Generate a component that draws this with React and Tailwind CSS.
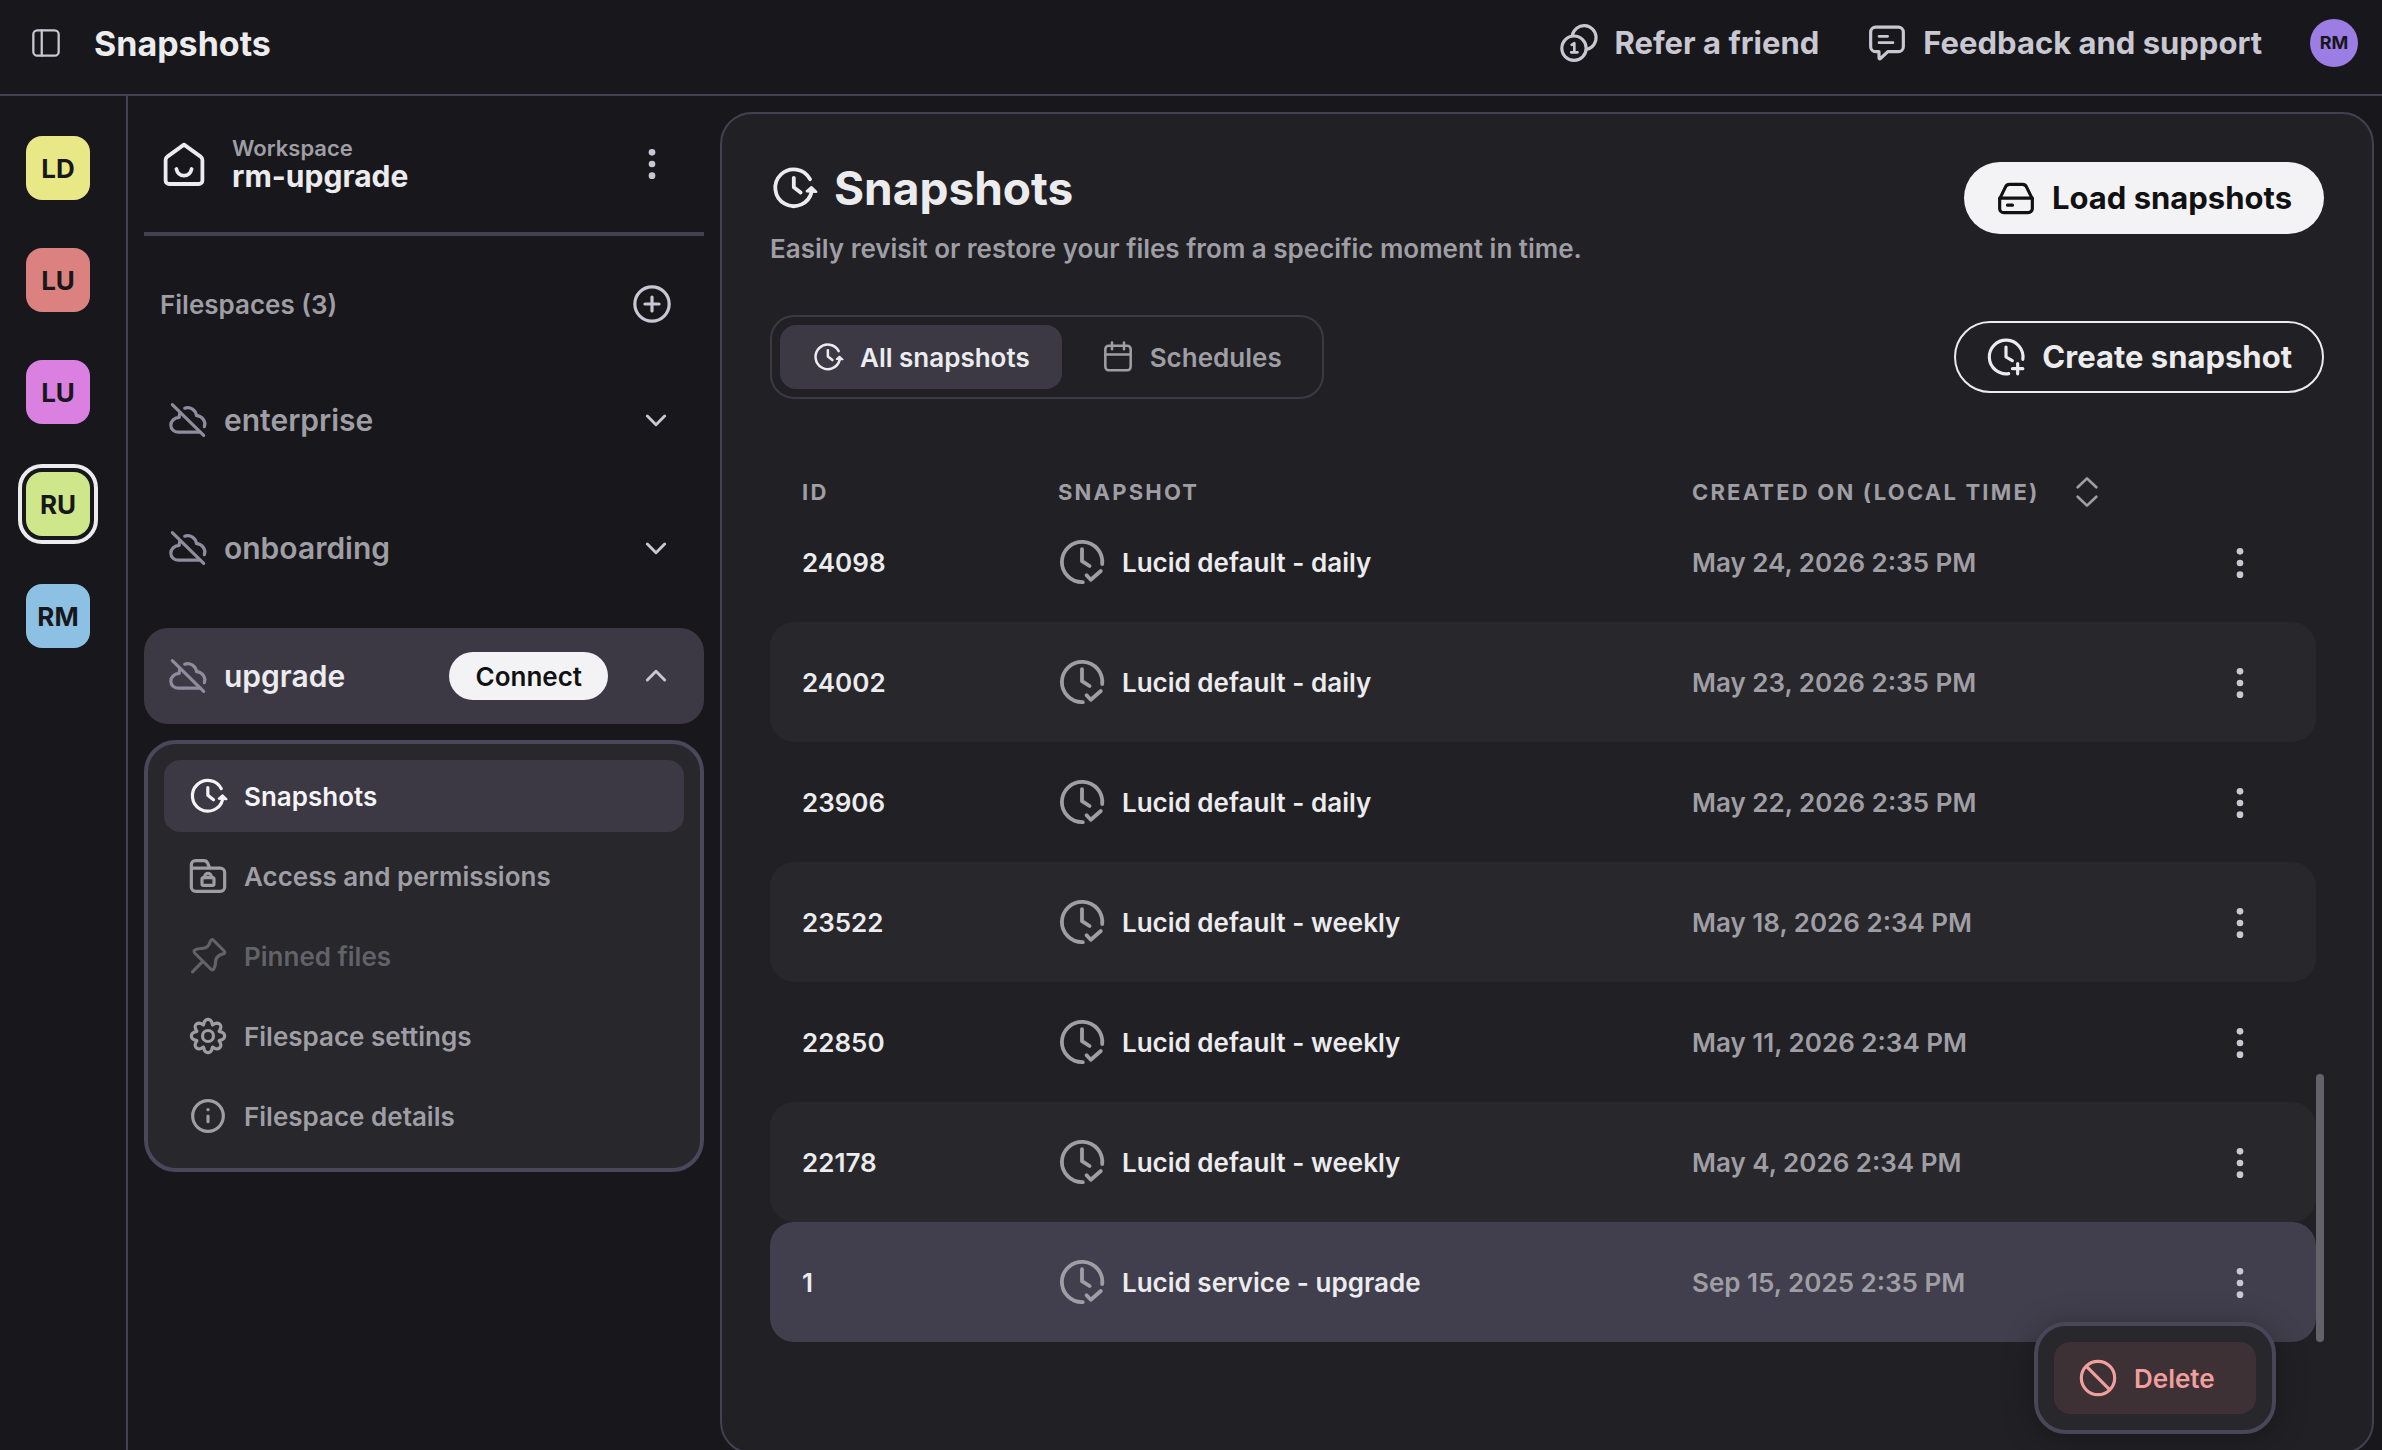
import { useState } from 'react';
import clsx from 'clsx';

const workspaces = [
    { id: 1, initials: 'LD', color: 'bg-[#e9e887]' },
    { id: 2, initials: 'LU', color: 'bg-[#db8280]' },
    { id: 3, initials: 'LU', color: 'bg-[#d980e1]' },
    { id: 4, initials: 'RU', color: 'bg-[#cde78a]' },
    { id: 5, initials: 'RM', color: 'bg-[#8dc1e3]' },
];

const snapshots = [
    { id: '24098', name: 'Lucid default - daily', created: 'May 24, 2026 2:35 PM' },
    { id: '24002', name: 'Lucid default - daily', created: 'May 23, 2026 2:35 PM' },
    { id: '23906', name: 'Lucid default - daily', created: 'May 22, 2026 2:35 PM' },
    { id: '23522', name: 'Lucid default - weekly', created: 'May 18, 2026 2:34 PM' },
    { id: '22850', name: 'Lucid default - weekly', created: 'May 11, 2026 2:34 PM' },
    { id: '22178', name: 'Lucid default - weekly', created: 'May 4, 2026 2:34 PM' },
    { id: '1', name: 'Lucid service - upgrade', created: 'Sep 15, 2025 2:35 PM' },
];

// Eight soft teeth around the centre of a 24x24 box
const gearPoints = Array.from({ length: 96 }, (_, i) => {
    const angle = (i / 96) * Math.PI * 2;
    const wave = Math.cos(angle * 8);
    const radius = 8.6 + 1.4 * wave;
    const twist = 0.07 * Math.sin(angle * 8);
    return `${12 + radius * Math.sin(angle + twist)},${12 - radius * Math.cos(angle + twist)}`;
}).join(' ');

function Icon({ className, strokeWidth = 1.9, children }) {
    return (
        <svg
            className={clsx('shrink-0', className)}
            viewBox="0 0 24 24"
            fill="none"
            stroke="currentColor"
            strokeWidth={strokeWidth}
            strokeLinecap="round"
            strokeLinejoin="round"
            aria-hidden="true"
        >
            {children}
        </svg>
    );
}

function SnapshotIcon({ className }) {
    return (
        <Icon className={className}>
            <path d="M20 7.6A9.2 9.2 0 1 0 20.8 14" />
            <path d="M11.9 6.9v4.7l3.4 2.7" />
            <path d="M20.7 11.6l-2.3 2 4.7.3z" fill="currentColor" strokeWidth="1.2" />
        </Icon>
    );
}

function ClockCheckIcon({ className }) {
    return (
        <Icon className={className}>
            <path d="M12.4 22.1A10.1 10.1 0 1 1 22.1 13" />
            <path d="M12 5.6v6l3.8 2.4" />
            <path d="M14.3 18.6l2.1 2.3 5-4.4" />
        </Icon>
    );
}

function ClockPlusIcon({ className }) {
    return (
        <Icon className={className}>
            <path d="M13.6 22A10.1 10.1 0 1 1 22.1 13.4" />
            <path d="M12 6v6l3.8 2.2" />
            <path d="M19 15.9v6.2M15.9 19h6.2" />
        </Icon>
    );
}

function CloudOffIcon({ className }) {
    return (
        <Icon className={className}>
            <path d="M2.6 2.8l18.8 18.4" />
            <path d="M7 8.2c-.3 1-.4 1.6-.2 2.2C3.9 10.5 1.7 12.6 1.7 15.1c0 2.4 1.9 4.2 4.3 4.2h13.4" />
            <path d="M10 4.9c3.4-1 6.7 1 7.1 4.5 3.3.2 5.9 3.3 4.7 6.6" />
        </Icon>
    );
}

function DotsIcon({ className }) {
    return (
        <Icon className={className}>
            <g fill="currentColor" stroke="none">
                <circle cx="12" cy="5" r="2" />
                <circle cx="12" cy="12" r="2" />
                <circle cx="12" cy="19" r="2" />
            </g>
        </Icon>
    );
}

function ChevronIcon({ up }) {
    return (
        <Icon className="size-8" strokeWidth={2.2}>
            <path d={up ? 'M5.5 15l6.5-6.5 6.5 6.5' : 'M5.5 9l6.5 6.5 6.5-6.5'} />
        </Icon>
    );
}

function FolderLockIcon({ className }) {
    return (
        <Icon className={className}>
            <path d="M2 7.3h17.4a2.6 2.6 0 0 1 2.6 2.6v8.7a2.6 2.6 0 0 1-2.6 2.6H4.6A2.6 2.6 0 0 1 2 18.6V5.2a2.4 2.4 0 0 1 2.4-2.4h5.1c1.1 0 1.9.6 2.3 1.5l1.2 3" />
            <rect x="8.4" y="13" width="7.2" height="4.6" rx="1" />
            <path d="M10 13v-.6a2 2 0 0 1 4 0v.6" />
        </Icon>
    );
}

function PinIcon({ className }) {
    return (
        <Icon className={className}>
            <path d="M2.7 21.5l5.6-5.7" />
            <path d="M15.4 2.7l6.3 6.3c.7.7.4 1.5-.6 1.7-2.7.6-4.5 2.5-4.6 5.1 0 1.5-.3 2.9-1 3.9-.5.8-1.3.8-1.9.1L4 10.2c-.6-.7-.5-1.4.3-1.9 1.1-.6 2.3-.8 3.8-.8 2.8 0 4.6-1.6 5.3-4.3.3-1.1 1.2-1.3 2-.5z" />
        </Icon>
    );
}

function GearIcon({ className }) {
    return (
        <Icon className={className}>
            <polygon points={gearPoints} />
            <circle cx="12" cy="12" r="3.3" />
        </Icon>
    );
}

function InfoIcon({ className }) {
    return (
        <Icon className={className}>
            <circle cx="12" cy="12" r="9.2" />
            <path d="M12 12v3.4" />
            <circle cx="12" cy="8.2" r="1" fill="currentColor" stroke="none" />
        </Icon>
    );
}

function Header() {
    return (
        <header className="flex h-24 shrink-0 items-center justify-between border-b-2 border-[#43404f] pr-6 pb-2 pl-[30px]">
            <div className="flex items-center gap-8">
                <button type="button" aria-label="Toggle sidebar" className="text-[#c9c7d1]">
                    <Icon className="size-8" strokeWidth={1.7}>
                        <rect x="2.5" y="2.5" width="19" height="19" rx="3" />
                        <path d="M8.8 2.5v19" />
                    </Icon>
                </button>
                <span className="text-[34px] font-bold">Snapshots</span>
            </div>
            <div className="flex items-center gap-12 text-[31px] font-bold text-[#c9c7d1]">
                <a href="#refer" className="flex items-center gap-4">
                    <Icon className="size-10">
                        <circle cx="9" cy="15.1" r="7.3" />
                        <path d="M8 7.3A7.2 7.2 0 1 1 17 15.7" />
                        <path d="M7.6 13.1l1.6-1v5.3M7.3 17.6h3.8" strokeWidth="1.6" />
                    </Icon>
                    Refer a friend
                </a>
                <a href="#feedback" className="flex items-center gap-4">
                    <Icon className="size-10">
                        <path d="M5.2 2.5h13.6a3 3 0 0 1 3 3v8.7a3 3 0 0 1-3 3h-6.3l-4.4 4.1c-.4.4-.9.2-.9-.4v-3.7H5.2a3 3 0 0 1-3-3V5.5a3 3 0 0 1 3-3z" />
                        <path d="M7.2 8h5.2M7.2 11.8h8.4" strokeWidth="1.6" />
                    </Icon>
                    Feedback and support
                </a>
                <button type="button" className="size-12 rounded-full bg-[#9b7de3] text-lg font-bold text-[#18171c]">
                    RM
                </button>
            </div>
        </header>
    );
}

function WorkspaceRail() {
    const [current, setCurrent] = useState(4);

    return (
        <nav aria-label="Workspaces" className="flex w-32 shrink-0 flex-col gap-12 border-r-2 border-[#43404f] pt-10 pl-[26px]">
            {workspaces.map((w) => (
                <button
                    key={w.id}
                    type="button"
                    onClick={() => setCurrent(w.id)}
                    className={clsx(
                        'size-16 rounded-2xl text-[26px] font-bold text-[#18171c]',
                        w.color,
                        w.id === current && 'outline-4 outline-offset-4 outline-[#ececee]'
                    )}
                >
                    {w.initials}
                </button>
            ))}
        </nav>
    );
}

function Filespace({ name }) {
    return (
        <button type="button" className="flex h-24 w-full items-center gap-4 rounded-3xl pr-8 pl-6 text-left">
            <CloudOffIcon className="size-10 text-[#8f8c9d]" />
            <span className="flex-1 text-[30px] font-semibold text-[#9f9ea4]">{name}</span>
            <span className="text-[#c9c7d1]"><ChevronIcon /></span>
        </button>
    );
}

function MenuItem({ icon: ItemIcon, label, active, disabled }) {
    return (
        <li>
            <button
                type="button"
                disabled={disabled}
                className={clsx(
                    'flex h-18 w-full items-center gap-4 rounded-2xl px-6 text-left text-[26px] font-semibold',
                    active && 'bg-[#3c3945] text-[#f4f4f6]',
                    disabled && 'text-[#636268]',
                    !active && !disabled && 'text-[#9f9ea4]'
                )}
            >
                <ItemIcon className="size-10" />
                {label}
            </button>
        </li>
    );
}

function Sidebar() {
    return (
        <aside className="w-[592px] shrink-0 px-4">
            <div className="flex h-34 items-center gap-6 pr-8 pl-4">
                <Icon className="size-12">
                    <path d="M12 2.3l8.3 6c.6.4.9 1 .9 1.7v10.2a1.8 1.8 0 0 1-1.8 1.8H4.6a1.8 1.8 0 0 1-1.8-1.8V10c0-.7.3-1.3.9-1.7z" />
                    <path d="M8.2 14.5c.4 2 1.9 3.3 3.8 3.3s3.4-1.3 3.8-3.3" />
                </Icon>
                <div className="flex-1 pb-1">
                    <p className="text-[22px] leading-7 font-semibold text-[#9f9ea4]">Workspace</p>
                    <p className="text-[30px] leading-7 font-bold">rm-upgrade</p>
                </div>
                <button type="button" aria-label="Workspace menu" className="text-[#c9c7d1]">
                    <DotsIcon className="size-10" />
                </button>
            </div>
            <hr className="border-t-4 border-[#43404f]" />
            <div className="flex h-34 items-center justify-between pr-8 pl-4">
                <h2 className="text-[26px] font-semibold text-[#9f9ea4]">Filespaces (3)</h2>
                <button type="button" aria-label="Add filespace" className="text-[#c9c7d1]">
                    <Icon className="size-10">
                        <circle cx="12" cy="12" r="10.3" />
                        <path d="M12 7.8v8.4M7.8 12h8.4" />
                    </Icon>
                </button>
            </div>
            <div className="flex flex-col gap-8">
                <Filespace name="enterprise" />
                <Filespace name="onboarding" />
                <div className="flex h-24 items-center gap-4 rounded-3xl bg-[#3c3945] pr-8 pl-6">
                    <CloudOffIcon className="size-10 text-[#8f8c9d]" />
                    <span className="flex-1 text-[30px] font-semibold">upgrade</span>
                    <button type="button" className="mr-4 h-12 rounded-full bg-[#f3f3f5] px-[26px] text-[26px] font-semibold text-[#111113]">
                        Connect
                    </button>
                    <button type="button" aria-label="Collapse upgrade" className="text-[#c9c7d1]">
                        <ChevronIcon up />
                    </button>
                </div>
            </div>
            <ul className="mt-4 flex flex-col gap-2 rounded-[32px] border-4 border-[#4a475a] bg-[#28272c] p-4">
                <MenuItem icon={SnapshotIcon} label="Snapshots" active />
                <MenuItem icon={FolderLockIcon} label="Access and permissions" />
                <MenuItem icon={PinIcon} label="Pinned files" disabled />
                <MenuItem icon={GearIcon} label="Filespace settings" />
                <MenuItem icon={InfoIcon} label="Filespace details" />
            </ul>
        </aside>
    );
}

function SnapshotRow({ snapshot, striped, menuOpen, onToggle }) {
    const cell = clsx(menuOpen ? 'bg-[#413f4d]' : striped && 'bg-[#28272c]');

    return (
        <tr className="h-30 text-[26px] font-semibold">
            <td className={clsx('rounded-l-3xl pl-8', cell)}>{snapshot.id}</td>
            <td className={clsx('pl-8', cell)}>
                <div className="flex items-center gap-4">
                    <ClockCheckIcon className="size-12 text-[#9f9ea4]" />
                    {snapshot.name}
                </div>
            </td>
            <td className={clsx('pl-[30px] text-[#9f9ea4]', cell)}>{snapshot.created}</td>
            <td className={clsx('relative rounded-r-3xl text-center', cell)}>
                <button type="button" aria-label="Snapshot menu" onClick={onToggle} className="align-middle text-[#c9c7d1]">
                    <DotsIcon className="size-10" />
                </button>
                {menuOpen && (
                    <div className="absolute top-25 right-10 z-10 rounded-[32px] border-4 border-[#494659] bg-[#28272c] p-4 shadow-[0_4px_32px_rgba(0,0,0,0.3)]">
                        <button type="button" className="flex h-18 w-[202px] items-center gap-4 rounded-2xl bg-[#3d3136] px-6 text-[#f19f9c]">
                            <Icon className="size-10">
                                <circle cx="12" cy="12" r="10" />
                                <path d="M5.2 5.2l13.6 13.6" />
                            </Icon>
                            Delete
                        </button>
                    </div>
                )}
            </td>
        </tr>
    );
}

export default function App() {
    const [openRow, setOpenRow] = useState('1');

    return (
        <div className="flex h-screen flex-col overflow-hidden bg-[#18171c] font-['Inter',sans-serif] text-[#ececee]">
            <Header />
            <div className="flex min-h-0 flex-1">
                <WorkspaceRail />
                <Sidebar />
                <main className="mt-4 mr-2 -mb-1 min-w-0 flex-1 rounded-[32px] border-2 border-[#43404f] bg-[#212024] p-12">
                    <div className="flex items-start justify-between">
                        <div>
                            <h1 className="flex h-13 items-center gap-4 text-[46px] font-bold">
                                <SnapshotIcon className="size-12" />
                                Snapshots
                            </h1>
                            <p className="mt-4 text-[26px] leading-[37px] font-semibold text-[#9f9ea4]">
                                Easily revisit or restore your files from a specific moment in time.
                            </p>
                        </div>
                        <button type="button" className="flex h-18 items-center gap-4 rounded-full bg-[#f3f3f5] px-8 text-[31px] font-bold text-[#111113]">
                            <Icon className="size-10">
                                <path d="M2.2 12.5v5.8a2.5 2.5 0 0 0 2.5 2.5h14.6a2.5 2.5 0 0 0 2.5-2.5v-5.8l-3.6-7.3a2.5 2.5 0 0 0-2.2-1.4H8a2.5 2.5 0 0 0-2.2 1.4z" />
                                <path d="M2.2 12.1h19.6M6.9 16.3h3" />
                            </Icon>
                            Load snapshots
                        </button>
                    </div>

                    <div className="mt-12 flex items-center justify-between">
                        <div className="flex gap-2 rounded-3xl border-2 border-[#3c3945] p-2 text-[26px] font-semibold">
                            <button type="button" className="flex h-16 items-center gap-4 rounded-2xl bg-[#3c3945] px-8">
                                <SnapshotIcon className="size-8" />
                                All snapshots
                            </button>
                            <button type="button" className="flex h-16 items-center gap-4 rounded-2xl px-8 text-[#9f9ea4]">
                                <Icon className="size-8">
                                    <rect x="2.5" y="3.5" width="19" height="18.5" rx="2.6" />
                                    <path d="M2.5 10.2h19M7.5 1.2v5M16.5 1.2v5" />
                                </Icon>
                                Schedules
                            </button>
                        </div>
                        <button type="button" className="flex h-18 items-center gap-4 rounded-full border-2 border-[#ececee] px-[30px] text-[31px] font-bold">
                            <ClockPlusIcon className="size-10" />
                            Create snapshot
                        </button>
                    </div>

                    <div className="flex">
                        <table className="w-full table-fixed border-separate border-spacing-0 text-left">
                            <colgroup>
                                <col className="w-64" />
                                <col className="w-[636px]" />
                                <col />
                                <col className="w-38" />
                            </colgroup>
                            <thead>
                                <tr className="h-[103px] align-bottom text-[22px] leading-5 tracking-widest text-[#9f9ea4] uppercase">
                                    <th className="pl-8 font-bold">Id</th>
                                    <th className="pl-8 font-bold">Snapshot</th>
                                    <th className="pl-[30px] font-bold">
                                        <button type="button" className="flex h-5 items-center gap-8 tracking-widest uppercase">
                                            Created on (local time)
                                            <Icon className="size-8" strokeWidth={2}>
                                                <path d="M5 8.5L12 1.8l7 6.7M5 15.5l7 6.7 7-6.7" />
                                            </Icon>
                                        </button>
                                    </th>
                                    <th aria-label="Actions" />
                                </tr>
                            </thead>
                            <tbody>
                                {snapshots.map((s, i) => (
                                    <SnapshotRow
                                        key={s.id}
                                        snapshot={s}
                                        striped={i % 2 === 1}
                                        menuOpen={openRow === s.id}
                                        onToggle={() => setOpenRow(openRow === s.id ? null : s.id)}
                                    />
                                ))}
                            </tbody>
                        </table>
                        {/* Scroll thumb, resting at the end of the list */}
                        <div className="flex w-2 shrink-0 flex-col justify-end">
                            <div className="h-67 rounded-full bg-[#636169]" />
                        </div>
                    </div>
                </main>
            </div>
        </div>
    );
}
